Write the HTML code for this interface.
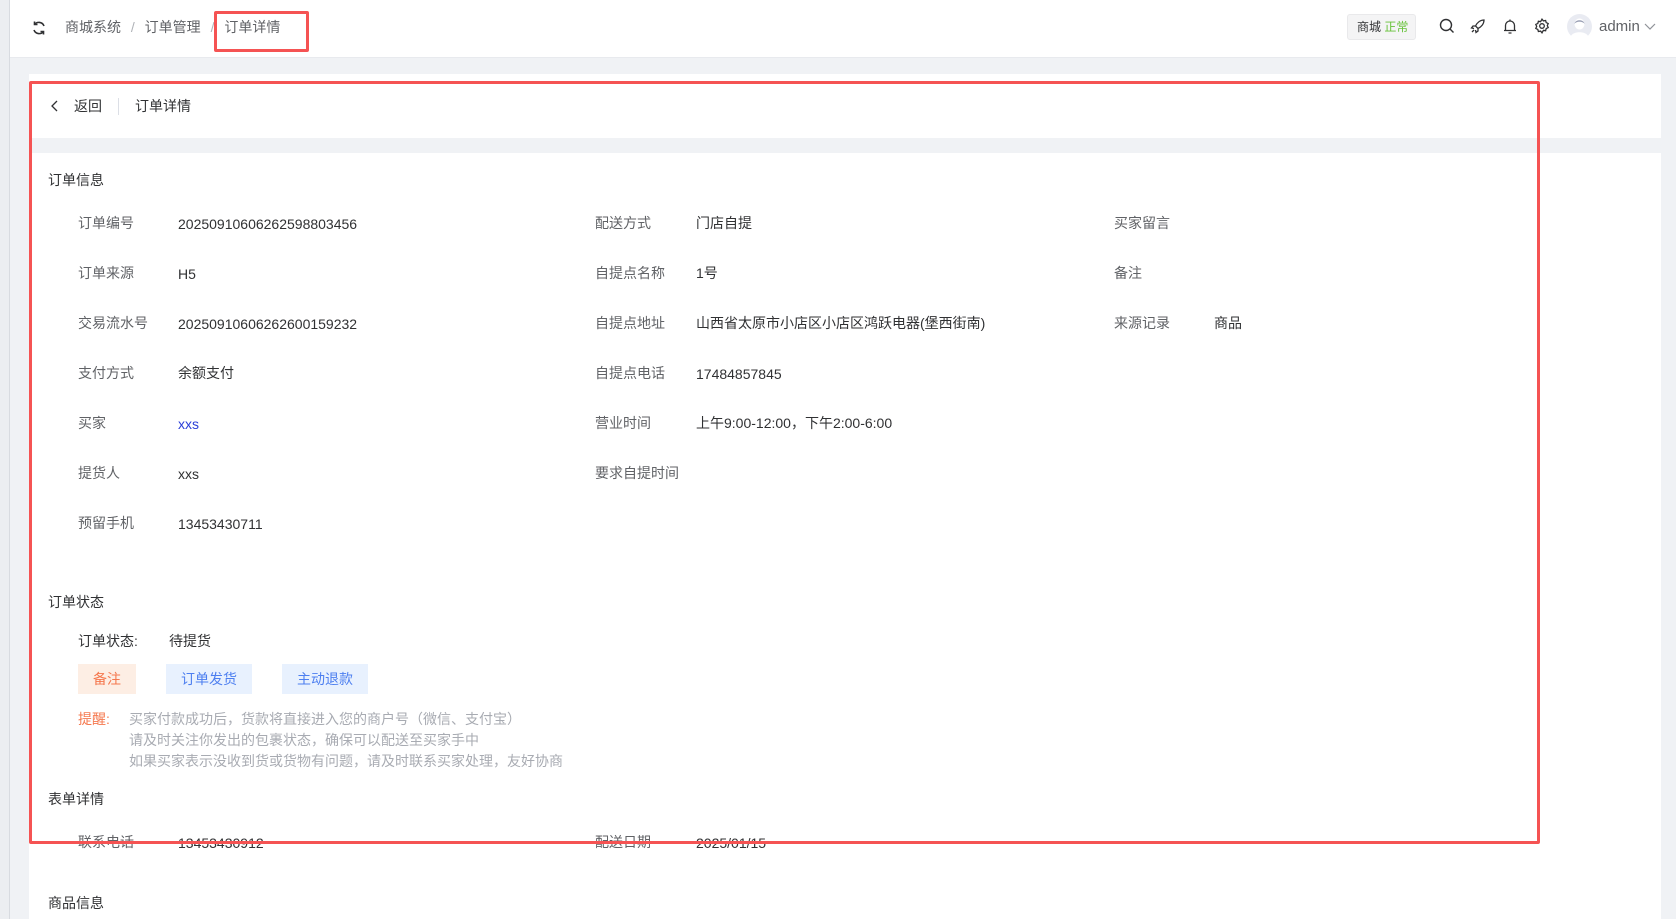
<!DOCTYPE html>
<html><head><meta charset="utf-8"><style>
*{margin:0;padding:0;box-sizing:border-box}
body{width:1676px;height:919px;overflow:hidden;background:#f0f2f5;font-family:"Liberation Sans","Noto Sans CJK SC",sans-serif;font-size:14px;line-height:20px;color:#303133;position:relative}
.a{position:absolute;white-space:nowrap;line-height:20px}
.top{position:absolute;left:0;top:0;width:1676px;height:58px;background:#fff;border-bottom:1px solid #e8eaee}
.lbl{color:#606266}
.btn{position:absolute;height:30px;line-height:30px;text-align:center;font-size:14px}
.tip{color:#a8abb2}
</style></head><body>
<div class="top"></div>
<div class="a" style="left:0;top:0;width:9px;height:919px;background:#eceef1"></div>
<div class="a" style="left:9px;top:0;width:1px;height:919px;background:#d8dbe0"></div>
<svg class="a" style="left:31px;top:20px" width="16" height="16" viewBox="0 0 16 16" fill="none" stroke="#303133" stroke-width="1.6"><path d="M13 6A5.5 5.5 0 0 0 3.5 4.5M3 10a5.5 5.5 0 0 0 9.5 1.5"/><path d="M3.5 1.5v3h3M12.5 14.5v-3h-3"/></svg>
<div class="a" style="left:65px;top:17px;color:#606266">商城系统 <span style="color:#b0b3b8;margin:0 6px">/</span> 订单管理 <span style="color:#b0b3b8;margin:0 6px">/</span> 订单详情</div>
<div class="a" style="left:214px;top:11px;width:95px;height:41px;border:3px solid #f55353;border-radius:2px"></div>
<div class="a" style="left:1347px;top:14px;width:69px;height:26px;background:#f4f4f5;border:1px solid #e9e9eb;border-radius:3px;font-size:12px;line-height:24px;padding-left:9px">商城 <span style="color:#67c23a">正常</span></div>
<svg class="a" style="left:1439px;top:18px" width="16" height="16" viewBox="0 0 16 16" fill="none" stroke="#303133" stroke-width="1.4"><circle cx="7" cy="7" r="5.5"/><path d="M11 11l3.5 3.5"/></svg>
<svg class="a" style="left:1470px;top:18px" width="16" height="16" viewBox="0 0 16 16" fill="none" stroke="#303133" stroke-width="1.3"><path d="M14 2c-4 0-7 3-8.5 6l2.5 2.5c3-1.5 6-4.5 6-8.5zM5.5 8L3 8l-1.5 2 2.5.5M8 10.5l0 2.5-2 1.5-.5-2.5M4 12l-2 2"/></svg>
<svg class="a" style="left:1502px;top:18px" width="16" height="17" viewBox="0 0 16 17" fill="none" stroke="#303133" stroke-width="1.3"><path d="M3.5 12.5V7.5a4.5 4.5 0 0 1 9 0v5h1.5H2zM6.5 15h3M8 1.5v1.5"/></svg>
<svg class="a" style="left:1534px;top:18px" width="16" height="16" viewBox="0 0 16 16" fill="none" stroke="#303133" stroke-width="1.3"><circle cx="8" cy="8" r="2.3"/><path d="M8 1.2l1.4 1.7 2.2-.4.6 2.1 2 1-.9 2 .9 2-2 1-.6 2.1-2.2-.4L8 14.8l-1.4-1.7-2.2.4-.6-2.1-2-1 .9-2-.9-2 2-1 .6-2.1 2.2.4z"/></svg>
<svg class="a" style="left:1567px;top:14px" width="25" height="25" viewBox="0 0 25 25"><circle cx="12.5" cy="12.5" r="12.5" fill="#e9ebf2"/><ellipse cx="12.5" cy="10" rx="5" ry="5.5" fill="#fff"/><path d="M7.5 10c0-5 10-5 10 0-1-3-9-3-10 0z" fill="#9aa0b5"/><path d="M4 22c2-5 15-5 17 0a12 12 0 0 1-17 0z" fill="#fff"/></svg>
<div class="a" style="left:1599px;top:17px;color:#606266;font-size:15px">admin</div>
<svg class="a" style="left:1644px;top:23px" width="12" height="8" viewBox="0 0 12 8" fill="none" stroke="#909399" stroke-width="1.2"><path d="M1 1l5 5 5-5"/></svg>

<div class="a" style="left:29px;top:74px;width:1632px;height:64px;background:#fff"></div>
<div class="a" style="left:29px;top:153px;width:1632px;height:766px;background:#fff"></div>
<svg class="a" style="left:50px;top:100px" width="10" height="12" viewBox="0 0 10 12" fill="none" stroke="#303133" stroke-width="1.3"><path d="M7 1L2 6l5 5"/></svg>
<div class="a" style="left:74px;top:96px">返回</div>
<div class="a" style="left:118px;top:98px;width:1px;height:17px;background:#dcdfe6"></div>
<div class="a" style="left:135px;top:96px">订单详情</div>

<div class="a" style="left:48px;top:170px">订单信息</div>
<div class="a lbl" style="left:78px;top:213px">订单编号</div><div class="a" style="left:178px;top:214px">20250910606262598803456</div>
<div class="a lbl" style="left:78px;top:263px">订单来源</div><div class="a" style="left:178px;top:264px">H5</div>
<div class="a lbl" style="left:78px;top:313px">交易流水号</div><div class="a" style="left:178px;top:314px">20250910606262600159232</div>
<div class="a lbl" style="left:78px;top:363px">支付方式</div><div class="a" style="left:178px;top:363px">余额支付</div>
<div class="a lbl" style="left:78px;top:413px">买家</div><div class="a" style="left:178px;top:414px;color:#2b3fd8">xxs</div>
<div class="a lbl" style="left:78px;top:463px">提货人</div><div class="a" style="left:178px;top:464px">xxs</div>
<div class="a lbl" style="left:78px;top:513px">预留手机</div><div class="a" style="left:178px;top:514px">13453430711</div>

<div class="a lbl" style="left:595px;top:213px">配送方式</div><div class="a" style="left:696px;top:213px">门店自提</div>
<div class="a lbl" style="left:595px;top:263px">自提点名称</div><div class="a" style="left:696px;top:263px">1号</div>
<div class="a lbl" style="left:595px;top:313px">自提点地址</div><div class="a" style="left:696px;top:313px">山西省太原市小店区小店区鸿跃电器(堡西街南)</div>
<div class="a lbl" style="left:595px;top:363px">自提点电话</div><div class="a" style="left:696px;top:364px">17484857845</div>
<div class="a lbl" style="left:595px;top:413px">营业时间</div><div class="a" style="left:696px;top:413px">上午9:00-12:00，下午2:00-6:00</div>
<div class="a lbl" style="left:595px;top:463px">要求自提时间</div>

<div class="a lbl" style="left:1114px;top:213px">买家留言</div>
<div class="a lbl" style="left:1114px;top:263px">备注</div>
<div class="a lbl" style="left:1114px;top:313px">来源记录</div><div class="a" style="left:1214px;top:313px">商品</div>

<div class="a" style="left:48px;top:592px">订单状态</div>
<div class="a" style="left:78px;top:631px">订单状态:</div><div class="a" style="left:169px;top:631px">待提货</div>
<div class="btn" style="left:78px;top:664px;width:58px;background:#fdeee4;color:#f5784e">备注</div>
<div class="btn" style="left:166px;top:664px;width:86px;background:#e8f1fe;color:#4d7ff0">订单发货</div>
<div class="btn" style="left:282px;top:664px;width:86px;background:#e8f1fe;color:#4d7ff0">主动退款</div>
<div class="a" style="left:78px;top:709px;color:#f5784e">提醒:</div>
<div class="a tip" style="left:129px;top:709px">买家付款成功后，货款将直接进入您的商户号（微信、支付宝）</div>
<div class="a tip" style="left:129px;top:730px">请及时关注你发出的包裹状态，确保可以配送至买家手中</div>
<div class="a tip" style="left:129px;top:751px">如果买家表示没收到货或货物有问题，请及时联系买家处理，友好协商</div>

<div class="a" style="left:48px;top:789px">表单详情</div>
<div class="a lbl" style="left:78px;top:832px">联系电话</div><div class="a" style="left:178px;top:833px">13453430912</div>
<div class="a lbl" style="left:595px;top:832px">配送日期</div><div class="a" style="left:696px;top:833px">2025/01/15</div>
<div class="a" style="left:48px;top:893px">商品信息</div>

<div class="a" style="left:29px;top:81px;width:1511px;height:763px;border:3px solid #f55353;border-radius:2px"></div>
</body></html>
